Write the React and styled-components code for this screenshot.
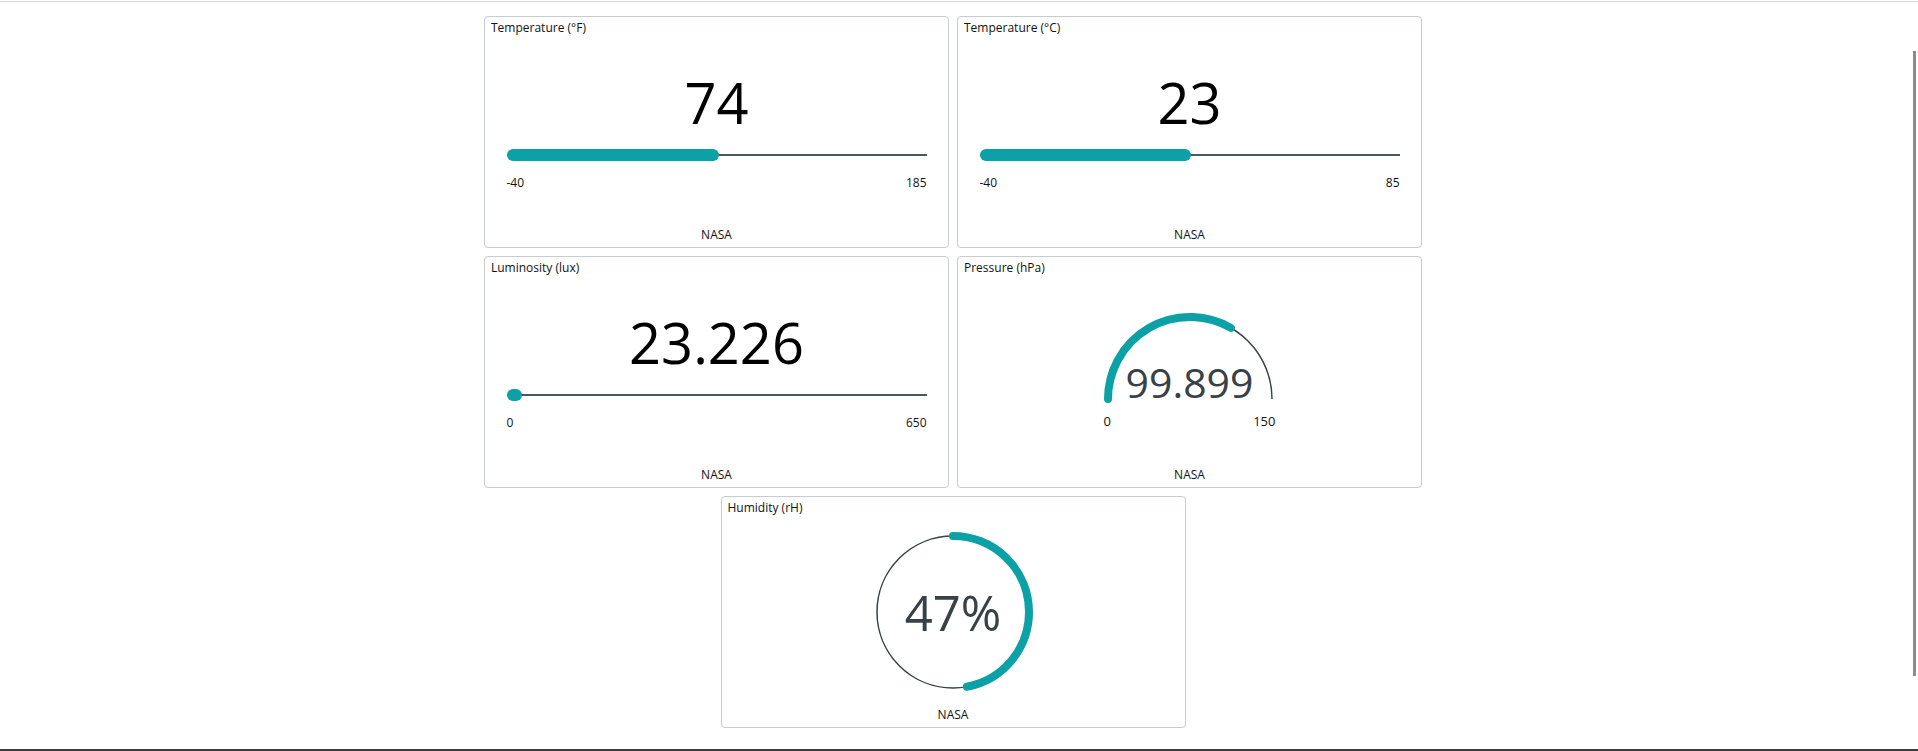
import React from "react";
import styled, { createGlobalStyle } from "styled-components";

const GlobalStyle = createGlobalStyle`
	html, body {
		margin: 0;
		padding: 0;
		background: #ffffff;
	}
	body {
		font-family: 'Open Sans', 'Noto Sans', sans-serif;
		color: #000000;
	}
	* {
		box-sizing: border-box;
	}
`;

const TEAL = "#0ca1a6";
const DARK = "#374146";

const Frame = styled.div`
	position: relative;
	height: 100vh;
	padding-top: 1px;
	border-bottom: 2px solid #3b3b3b;
	overflow: hidden;
`;

const TopRule = styled.div`
	border-top: 1px solid #d3d8d8;
`;

const ScrollThumb = styled.div`
	position: absolute;
	top: 51px;
	right: 2px;
	width: 3px;
	height: 625px;
	background: #8c8c8c;
`;

const Board = styled.main`
	padding: 14px 12px 0 0;
	display: flex;
	justify-content: center;
`;

const Grid = styled.div`
	width: 938px;
	display: flex;
	flex-wrap: wrap;
	justify-content: center;
	gap: 8px;
`;

const Card = styled.section`
	width: 465px;
	height: 232px;
	border: 1px solid #c5cdcf;
	border-radius: 4px;
	display: flex;
	flex-direction: column;
	background: #fff;
`;

const CardTitle = styled.div`
	font-size: 12px;
	line-height: 16px;
	padding: 3px 6px 0;
	color: #111;
`;

const CardBody = styled.div`
	flex: 1;
	display: flex;
	flex-direction: column;
	align-items: center;
`;

const CardFooter = styled.div`
	text-align: center;
	font-size: 12px;
	line-height: 16px;
	padding-bottom: 4px;
	color: #111;
`;

/* slider widget */
const BigValue = styled.div`
	margin-top: 38px;
	font-size: 56px;
	line-height: 1;
	color: #000;
`;

const Track = styled.div`
	position: relative;
	width: 420px;
	height: 12px;
	margin-top: 19px;

	&::before {
		content: '';
		position: absolute;
		left: 0;
		right: 0;
		top: 5px;
		height: 2px;
		background: #4b575c;
	}
`;

const Fill = styled.div`
	position: absolute;
	left: 0;
	top: 0;
	height: 12px;
	border-radius: 6px;
	background: ${TEAL};
`;

const RangeRow = styled.div`
	width: ${(p) => p.$width}px;
	margin-top: ${(p) => p.$gap}px;
	display: flex;
	justify-content: space-between;
	font-size: ${(p) => p.$size}px;
	line-height: 16px;
	color: #111;
`;

/* half gauge */
const GaugeWrap = styled.div`
	position: relative;
	width: 172px;
	height: 90px;
	margin-top: 37px;

	svg {
		display: block;
	}
`;

const GaugeValue = styled.div`
	position: absolute;
	left: -40px;
	right: -40px;
	top: 49px;
	text-align: center;
	font-size: 41px;
	line-height: 1;
	color: ${DARK};
`;

/* ring */
const RingWrap = styled.div`
	position: relative;
	width: 160px;
	height: 160px;
	margin-top: 16px;

	svg {
		display: block;
	}
`;

const RingValue = styled.div`
	position: absolute;
	inset: 0;
	display: flex;
	align-items: center;
	justify-content: center;
	font-size: 49px;
	line-height: 1;
	color: ${DARK};
`;

function SliderWidget({ title, value, label, min, max }) {
	const pct = Math.min(1, Math.max(0, (value - min) / (max - min)));
	const width = Math.max(14, pct * 420);
	return (
		<Card>
			<CardTitle>{title}</CardTitle>
			<CardBody>
				<BigValue>{label}</BigValue>
				<Track>
					<Fill style={{ width }} />
				</Track>
				<RangeRow $width={420} $gap={14} $size={12}>
					<span>{min}</span>
					<span>{max}</span>
				</RangeRow>
			</CardBody>
			<CardFooter>NASA</CardFooter>
		</Card>
	);
}

function GaugeWidget({ title, value, label, min, max }) {
	const pct = (value - min) / (max - min);
	const r = 82;
	const cx = 86;
	const cy = 86;
	const a = Math.PI * (1 - pct);
	const ex = cx + r * Math.cos(a);
	const ey = cy - r * Math.sin(a);
	return (
		<Card>
			<CardTitle>{title}</CardTitle>
			<CardBody>
				<GaugeWrap>
					<svg width="172" height="90" viewBox="0 0 172 90">
						<path
							d={`M ${cx - r} ${cy} A ${r} ${r} 0 0 1 ${cx + r} ${cy}`}
							fill="none"
							stroke={DARK}
							strokeWidth="1.5"
						/>
						<path
							d={`M ${cx - r} ${cy} A ${r} ${r} 0 0 1 ${ex} ${ey}`}
							fill="none"
							stroke={TEAL}
							strokeWidth="8"
							strokeLinecap="round"
						/>
					</svg>
					<GaugeValue>{label}</GaugeValue>
				</GaugeWrap>
				<RangeRow $width={172} $gap={10} $size={13}>
					<span>{min}</span>
					<span>{max}</span>
				</RangeRow>
			</CardBody>
			<CardFooter>NASA</CardFooter>
		</Card>
	);
}

function RingWidget({ title, value }) {
	const r = 76;
	const c = 2 * Math.PI * r;
	return (
		<Card>
			<CardTitle>{title}</CardTitle>
			<CardBody>
				<RingWrap>
					<svg width="160" height="160" viewBox="0 0 160 160">
						<circle cx="80" cy="80" r={r} fill="none" stroke={DARK} strokeWidth="1.5" />
						<circle
							cx="80"
							cy="80"
							r={r}
							fill="none"
							stroke={TEAL}
							strokeWidth="8"
							strokeLinecap="round"
							strokeDasharray={`${(value / 100) * c} ${c}`}
							transform="rotate(-90 80 80)"
						/>
					</svg>
					<RingValue>{value}%</RingValue>
				</RingWrap>
			</CardBody>
			<CardFooter>NASA</CardFooter>
		</Card>
	);
}

export default function App() {
	return (
		<>
			<GlobalStyle />
			<Frame>
				<TopRule />
				<Board>
					<Grid>
						<SliderWidget title="Temperature (°F)" value={74} label="74" min={-40} max={185} />
						<SliderWidget title="Temperature (°C)" value={23} label="23" min={-40} max={85} />
						<SliderWidget title="Luminosity (lux)" value={23.226} label="23.226" min={0} max={650} />
						<GaugeWidget title="Pressure (hPa)" value={99.899} label="99.899" min={0} max={150} />
						<RingWidget title="Humidity (rH)" value={47} />
					</Grid>
				</Board>
				<ScrollThumb />
			</Frame>
		</>
	);
}
